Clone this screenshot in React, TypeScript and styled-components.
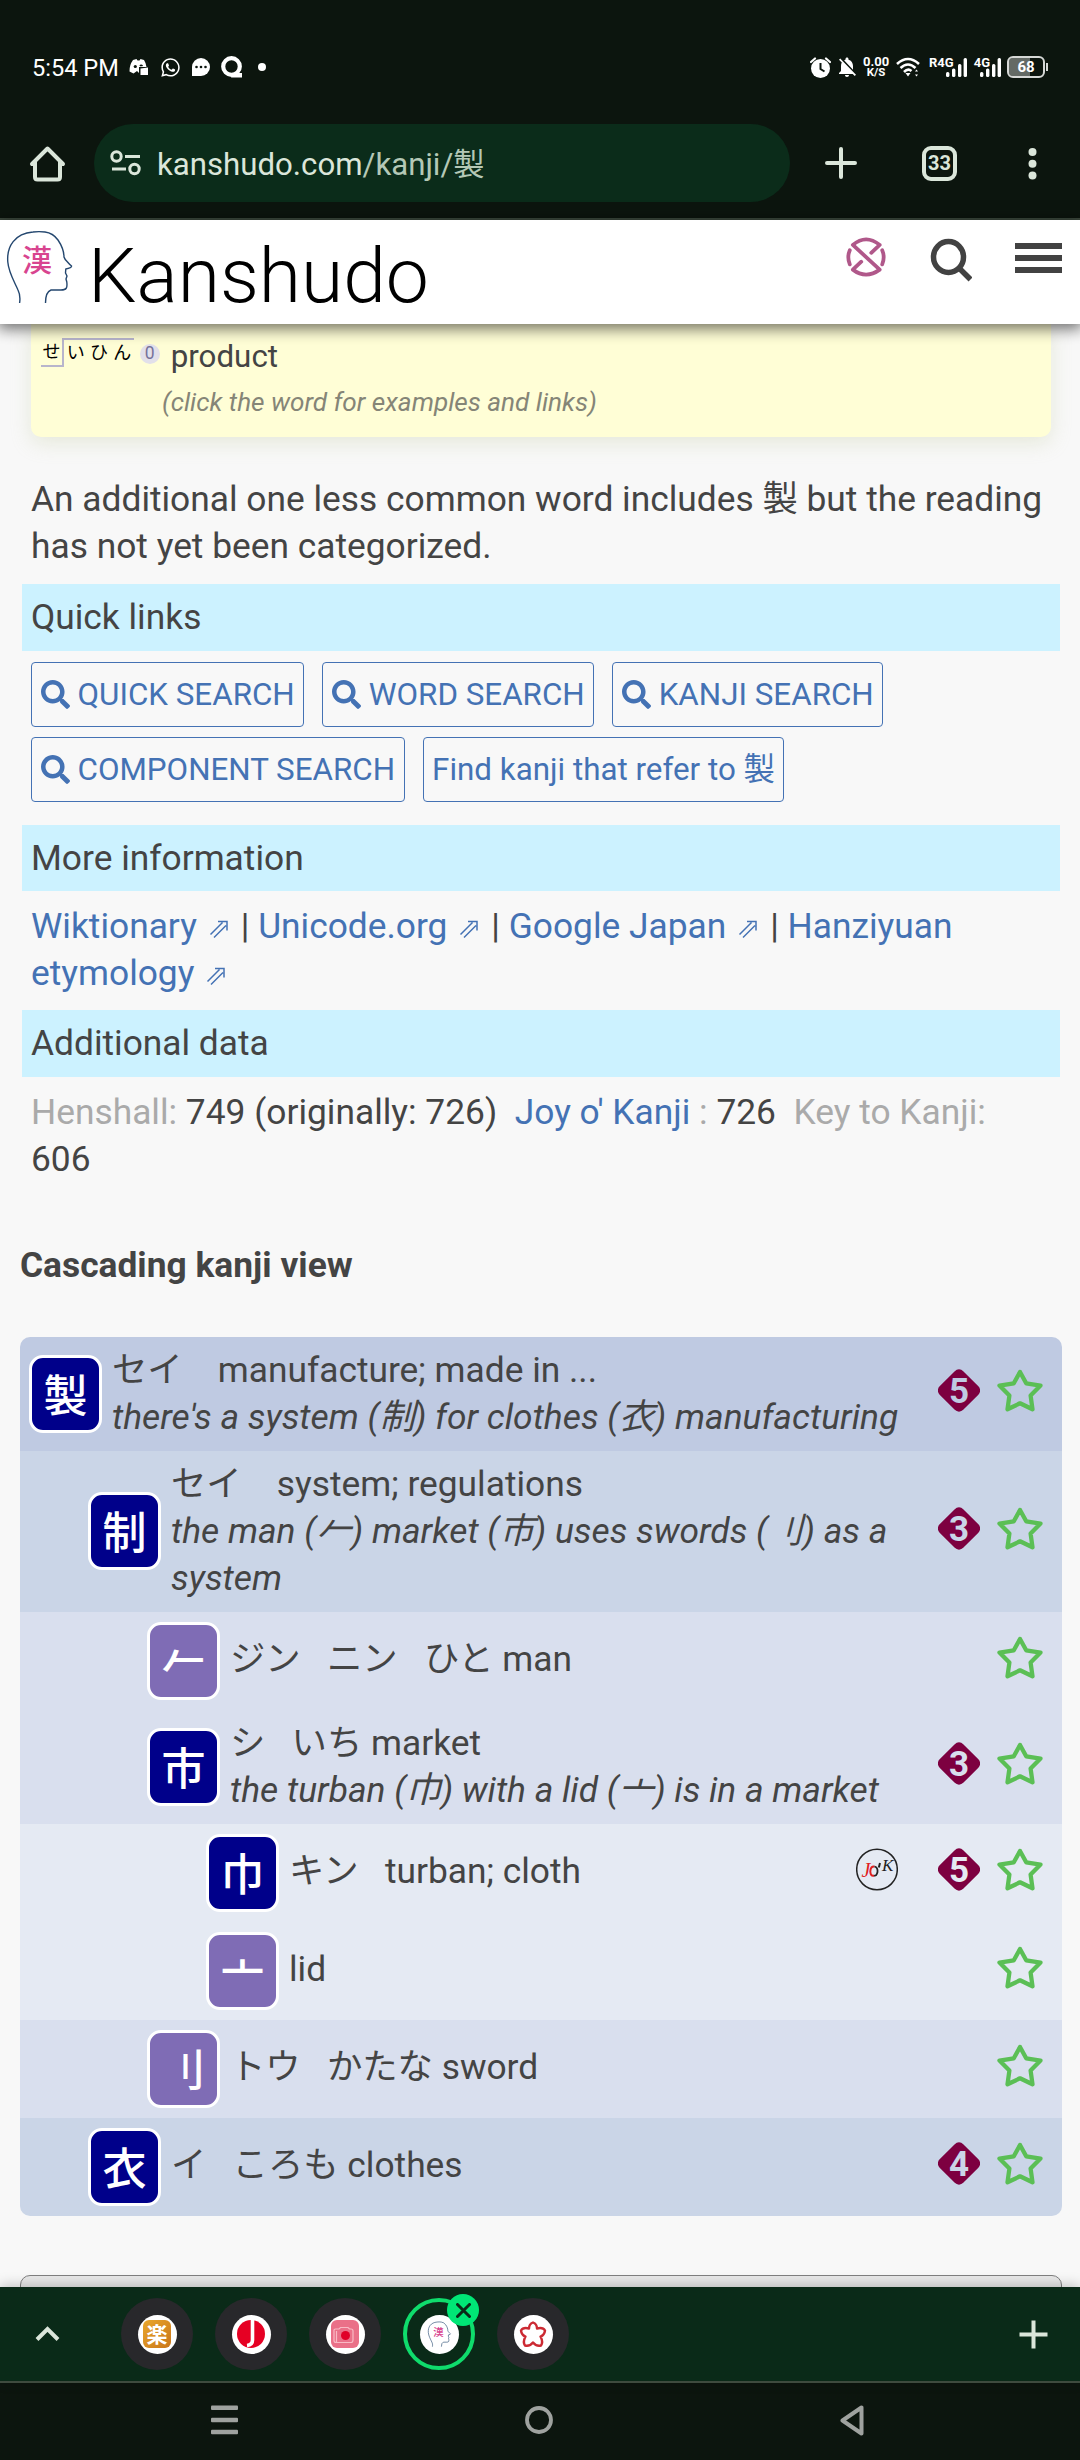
import React from "react";
import styled, { createGlobalStyle } from "styled-components";
import { FaWhatsapp, FaSearch } from "react-icons/fa";
import { MdNotificationsOff } from "react-icons/md";

const GlobalStyle = createGlobalStyle`
  *, *::before, *::after { box-sizing: border-box; }
  body { margin: 0; background: #0c150e; }
`;

const FONT = `Roboto, "Noto Sans CJK JP", sans-serif`;
const INK = "#444";
const LINK = "#4472b4";
const MINT = "#dbe6da";

const Screen = styled.div`
  width: 1080px;
  height: 2460px;
  display: flex;
  flex-direction: column;
  overflow: hidden;
  font-family: ${FONT};
  font-size: 35.33px;
  line-height: 47px;
  color: ${INK};
  background: #0c150e;
`;

/* ---------- status bar ---------- */

const StatusBar = styled.div`
  height: 124px;
  flex: none;
  display: flex;
  justify-content: space-between;
  align-items: center;
  padding: 10px 32px 0 32px;
  color: #fff;
`;

const StatusGroup = styled.div`
  display: flex;
  align-items: center;
  height: 24px;
  svg { display: block; flex: none; }
`;

const Clock = styled.span`
  font-size: 23.6px;
  line-height: 24px;
  width: 97px;
  white-space: nowrap;
  padding-top: 1px;
`;

const Spacer = styled.span<{ $w: number; $pull?: number }>`
  width: ${(p) => p.$w}px;
  margin-left: ${(p) => -(p.$pull || 0)}px;
  flex: none;
`;

const Speed = styled.div`
  width: 26px;
  display: flex;
  flex-direction: column;
  align-items: center;
  font-weight: 700;
  font-size: 13px;
  line-height: 11px;
  small { font-size: 11.5px; line-height: 11px; }
`;

const NetLabel = styled.span`
  font-size: 13px;
  font-weight: 700;
  line-height: 13px;
  align-self: flex-start;
  margin-top: 1px;
`;

const Battery = styled.div`
  width: 38px;
  height: 22px;
  border: 2px solid #d6d8d6;
  border-radius: 6px;
  font-size: 15px;
  font-weight: 700;
  line-height: 18px;
  text-align: center;
  background: linear-gradient(90deg, #646a65 62%, transparent 62%);
  background-clip: content-box;
`;

const BatteryTip = styled.span`
  width: 2px;
  height: 8px;
  margin-left: 1px;
  background: #d6d8d6;
`;

/* ---------- browser toolbar ---------- */

const Toolbar = styled.div`
  height: 96px;
  flex: none;
  display: flex;
  align-items: flex-start;
  border-bottom: 2px solid #3e4b3f;
  color: ${MINT};
  padding-left: 29px;
  svg { display: block; flex: none; }
`;

const ToolCell = styled.div<{ $w: number; $pad?: number }>`
  width: ${(p) => p.$w}px;
  padding-left: ${(p) => p.$pad || 0}px;
  height: 78px;
  flex: none;
  display: flex;
  align-items: center;
`;

const Omnibox = styled.div`
  width: 696px;
  height: 78px;
  flex: none;
  border-radius: 39px;
  background: #0b2c1a;
  display: flex;
  align-items: center;
  gap: 16px;
  padding-left: 16px;
  font-size: 31.2px;
  color: #b4c8b6;
  span { padding-top: 2px; }
  b { font-weight: 400; color: ${MINT}; }
`;

const TabCount = styled.div`
  width: 35px;
  height: 35px;
  border: 4px solid ${MINT};
  border-radius: 9px;
  font-size: 20px;
  font-weight: 700;
  line-height: 26px;
  text-align: center;
`;

/* ---------- site header ---------- */

const SiteHeader = styled.header`
  position: relative;
  z-index: 1;
  height: 104px;
  flex: none;
  display: flex;
  align-items: flex-start;
  background: #fff;
  box-shadow: 0 3px 14px 2px rgba(0, 0, 0, 0.55);
  padding-left: 4px;
  svg { display: block; flex: none; }
`;

const LogoMark = styled.div`
  padding-top: 9px;
`;

const SiteName = styled.span`
  width: 770px;
  padding: 11px 0 0 12px;
  font-size: 76.8px;
  line-height: 90px;
  font-weight: 300;
  color: #000;
`;

const HeaderIcons = styled.div`
  display: flex;
  gap: 43px;
  padding-top: 17px;
`;

/* ---------- page ---------- */

const Page = styled.main`
  height: 1963px;
  flex: none;
  overflow: hidden;
  background: #f8f8f8;
  display: flex;
  flex-direction: column;
`;

const WordCard = styled.section`
  height: 113px;
  flex: none;
  margin: 0 29px 0 31px;
  border-radius: 0 0 10px 10px;
  background: #fffed6;
  box-shadow: 0 6px 20px rgba(190, 200, 150, 0.3);
  padding: 10px 0 0 10px;
`;

const WordRow = styled.div`
  display: flex;
  height: 45px;
`;

const Pitch = styled.div`
  display: flex;
  margin-top: 4px;
  height: 30px;
  color: #000;
  font-size: 18px;
  line-height: 29px;
`;

const Mora = styled.span<{ $high?: boolean; $drop?: boolean }>`
  width: 23.2px;
  height: 29px;
  text-align: center;
  line-height: ${(p) => (p.$high ? 25 : 28)}px;
  border-top: ${(p) => (p.$high ? "2px solid #b8b5cc" : "0")};
  border-bottom: ${(p) => (p.$drop ? "2px solid #b8b5cc" : "0")};
  border-right: ${(p) => (p.$drop ? "2px solid #b8b5cc" : "0")};
`;

const Accent = styled.span`
  width: 20px;
  height: 20px;
  margin: 10px 0 0 6px;
  border-radius: 50%;
  background: #e2e0ea;
  color: #77739a;
  font-size: 17.5px;
  line-height: 19px;
  text-align: center;
`;

const Meaning = styled.span`
  font-size: 31.3px;
  line-height: 45px;
  margin-left: 11px;
`;

const Hint = styled.p`
  margin: 0 0 0 121px;
  font-size: 26.15px;
  line-height: 47px;
  font-style: italic;
  color: #858577;
`;

const Para = styled.p<{ $top: number; $bottom: number }>`
  margin: ${(p) => p.$top}px 10px ${(p) => p.$bottom}px 31px;
  flex: none;
  height: 94px;
  white-space: pre-line;
`;

const SectionBar = styled.h3`
  margin: 0 20px 0 22px;
  height: 66.5px;
  flex: none;
  padding-left: 9px;
  line-height: 66px;
  font-size: 35.33px;
  font-weight: 400;
  background: #ccf2ff;
`;

const Buttons = styled.div`
  display: flex;
  flex-wrap: wrap;
  gap: 10px 18px;
  margin: 11.5px 100px 22.5px 31px;
  flex: none;
`;

const Button = styled.button`
  height: 65px;
  display: flex;
  align-items: center;
  gap: 8px;
  padding: 0 8.5px;
  border: 1px solid ${LINK};
  border-radius: 4px;
  background: transparent;
  color: ${LINK};
  font-family: ${FONT};
  font-size: 31.35px;
  line-height: 37px;
  white-space: nowrap;
  svg { display: block; }
`;

const A = styled.a`
  color: ${LINK};
`;

const Ext = styled.svg`
  width: 20px;
  height: 20px;
  margin: 0 3.2px;
  vertical-align: -1px;
`;

const Muted = styled.span`
  color: #aaa;
`;

const Title = styled.h2`
  margin: 59.5px 0 47.5px 20px;
  flex: none;
  font-size: 35.33px;
  line-height: 47px;
  font-weight: 700;
`;

const Cascade = styled.section`
  flex: none;
  margin: 0 18px 0 20px;
  border-radius: 10px;
  overflow: hidden;
`;

const SHADES = ["#bfcae2", "#cad5e7", "#d9dfee", "#e5eaf3"];

const CascadeRow = styled.div<{ $level: number }>`
  display: flex;
  align-items: center;
  padding: 10px 19px 10px ${(p) => 9 + p.$level * 59}px;
  background: ${(p) => SHADES[p.$level]};
`;

const Tile = styled.div<{ $component?: boolean }>`
  width: 73px;
  height: 78px;
  flex: none;
  border: 3px solid #fff;
  border-radius: 14px;
  background: ${(p) => (p.$component ? "#7f6cb5" : "#00008a")};
  color: #fff;
  font-size: 44px;
  line-height: 71px;
  text-align: center;
  font-weight: 500;
  font-family: "Noto Sans CJK JP", sans-serif;
`;

const RowText = styled.div<{ $single: boolean }>`
  flex: 1;
  min-width: 0;
  margin: 0 0 ${(p) => (p.$single ? 2 : 0)}px 10px;
  white-space: pre;
  em { display: block; }
`;

const RowIcons = styled.div`
  display: flex;
  flex: none;
  margin-top: -6px;
  svg { display: block; }
`;

const NextPanel = styled.div`
  flex: none;
  margin: 59px 18px 0 20px;
  height: 40px;
  border: 1px solid #808080;
  border-radius: 10px;
  background: #e9e9e9;
`;

/* ---------- bottom bars ---------- */

const TabStrip = styled.div`
  position: relative;
  z-index: 1;
  height: 96px;
  flex: none;
  display: flex;
  align-items: center;
  background: #0a2a18;
  border-bottom: 2px solid #3e4b3f;
  box-shadow: 0 -2px 12px rgba(0, 0, 0, 0.22);
  padding-left: 35px;
  svg { display: block; flex: none; }
`;

const Tabs = styled.div`
  display: flex;
  gap: 22px;
  margin: 0 450px 0 61px;
`;

const Tab = styled.div<{ $active?: boolean }>`
  position: relative;
  width: 72px;
  height: 72px;
  flex: none;
  border-radius: 50%;
  display: flex;
  align-items: center;
  justify-content: center;
  background: ${(p) => (p.$active ? "transparent" : "#28282b")};
  border: ${(p) => (p.$active ? "4px solid #0fdc6c" : "0")};
`;

const Favicon = styled.div`
  width: 39px;
  height: 39px;
  border-radius: 50%;
  background: #fff;
  display: flex;
  align-items: center;
  justify-content: center;
`;

const GlyphIcon = styled.div`
  width: 28px;
  height: 28px;
  border-radius: 6px;
  background: linear-gradient(135deg, #e9a62c, #c9761a);
  color: #fff;
  font-family: "Noto Sans CJK JP", sans-serif;
  font-size: 21px;
  font-weight: 700;
  line-height: 27px;
  text-align: center;
`;

const CloseBadge = styled.div`
  position: absolute;
  left: 40px;
  top: -8px;
  width: 32px;
  height: 32px;
  border-radius: 50%;
  background: #00e676;
  display: flex;
  align-items: center;
  justify-content: center;
`;

const NavBar = styled.nav`
  height: 77px;
  flex: none;
  display: flex;
  align-items: center;
  justify-content: space-between;
  padding: 0 215px 3px 211px;
  svg { display: block; }
`;

/* ---------- drawings ---------- */

const Bars = () => (
  <svg width="21" height="20" viewBox="0 0 21 20" fill="#fff">
    <rect x="0" y="15" width="3.4" height="5" rx="1.5" />
    <rect x="6" y="11.5" width="3.4" height="8.5" rx="1.5" />
    <rect x="12" y="7" width="3.4" height="13" rx="1.5" />
    <rect x="17.6" y="1" width="3.4" height="19" rx="1.5" />
  </svg>
);

const HeadLogo = ({ size, weight }: { size: number; weight: number }) => (
  <svg width={size} height={(size * 76) / 72} viewBox="4 229 72 76">
    <path
      d="M19.6 303 C20.5 297 20 294 18 290 C14 281 8.5 272 7.8 262 C6.5 246 15 233.5 33 232 Q39 231.300 45 232 Q53 233 58 240 C62 246 64 251 64 257 Q64.500 259 67.500 262 Q70 265 71.600 266 Q71.500 268 65.800 269 L65.500 273 L67 276 L66 279 L66.800 282 C67.500 288 66.500 290 61 290 L51 290 Q45.500 292 45.500 303"
      fill="none"
      stroke="#24476f"
      strokeWidth={weight}
      strokeLinejoin="round"
    />
    <text x="22" y="271" fontSize="30" fontWeight="500" fill="#d8448f" fontFamily="Noto Sans CJK JP">漢</text>
  </svg>
);

const Star = () => (
  <svg width="46" height="43" viewBox="0 0 46 43">
    <path
      d="M23 3 L29.2 14.300 L43.500 16.500 L33.600 26.500 L35.500 40.300 L23 34.300 L10.500 40.300 L12.400 26.500 L2.500 16.500 L16.800 14.300Z"
      fill="none"
      stroke="#5bbf55"
      strokeWidth="4.300"
      strokeLinejoin="round"
    />
  </svg>
);

const Level = ({ n, color }: { n: number; color: string }) => (
  <svg width="42" height="43" viewBox="0 0 42 43">
    <rect x="4.300" y="4.800" width="33.400" height="33.400" rx="6" transform="rotate(45 21 21.500)" fill="#7d0040" />
    <text x="21" y="34" fontSize="35" fontWeight="700" textAnchor="middle" fill={color} fontFamily="Roboto">
      {n}
    </text>
  </svg>
);

const Jok = () => (
  <svg width="42" height="43" viewBox="0 0 42 43">
    <circle cx="21" cy="21.500" r="20.300" fill="none" stroke="#222" strokeWidth="1.500" />
    <text x="5.500" y="29" fontSize="20" fill="#e02020" fontFamily="Liberation Serif" fontStyle="italic">J</text>
    <path d="M18.500 18.500 Q14.500 18 14.300 23.500 Q14.500 28.500 18 27.500" fill="none" stroke="#e02020" strokeWidth="2" />
    <path d="M18.500 18.500 Q22 19.500 21.500 24 Q20.500 28.500 18 27.500" fill="none" stroke="#222" strokeWidth="1.800" />
    <path d="M24 15 L22.800 19.500" stroke="#222" strokeWidth="2" />
    <text x="26" y="23" fontSize="17" fill="#222" fontFamily="Liberation Serif" fontStyle="italic">K</text>
  </svg>
);

const ExtArrow = () => (
  <Ext viewBox="0 0 20 20" fill="none" stroke={LINK} strokeWidth="1.500">
    <path d="M1.500 15.500 L13.500 3.500 M5 18.500 L17 6.500 M9 2.500 H18 V11.500" />
  </Ext>
);

/* ---------- data ---------- */

type Entry = {
  level: number;
  kanji: string;
  component?: boolean;
  text: string;
  mnemonic?: string;
  grade?: number;
  jok?: boolean;
};

const ENTRIES: Entry[] = [
  { level: 0, kanji: "製", text: "セイ    manufacture; made in ...", mnemonic: "there's a system (制) for clothes (衣) manufacturing", grade: 5 },
  { level: 1, kanji: "制", text: "セイ    system; regulations", mnemonic: "the man (𠂉) market (市) uses swords (刂) as a\nsystem", grade: 3 },
  { level: 2, kanji: "𠂉", component: true, text: "ジン   ニン   ひと man" },
  { level: 2, kanji: "市", text: "シ   いち market", mnemonic: "the turban (巾) with a lid (亠) is in a market", grade: 3 },
  { level: 3, kanji: "巾", text: "キン   turban; cloth", grade: 5, jok: true },
  { level: 3, kanji: "亠", component: true, text: "lid" },
  { level: 2, kanji: "刂", component: true, text: "トウ   かたな sword" },
  { level: 1, kanji: "衣", text: "イ   ころも clothes", grade: 4 },
];

const SEARCHES = ["QUICK SEARCH", "WORD SEARCH", "KANJI SEARCH", "COMPONENT SEARCH"];

export default function App() {
  return (
    <Screen lang="ja">
      <GlobalStyle />
      <StatusBar>
        <StatusGroup>
          <Clock>5:54 PM</Clock>
          <svg width="20" height="18" viewBox="0 0 20 18">
            <path d="M4 2 L7.500 1 L8.500 2.500 H10.500 L11.500 1 L15 2 Q17 5 17.500 9 H10 V15 L8 13 L4.500 15.500 L0.500 13.500 Q0.300 7 4 2Z" fill="#fff" />
            <circle cx="6.300" cy="8.500" r="1.600" fill="#0c150e" />
            <path d="M11 8 Q12 6.500 13.500 8" stroke="#0c150e" strokeWidth="1.500" fill="none" />
            <path d="M11.500 10.500 L19 9.500 V17 H11.500Z" fill="#fff" />
          </svg>
          <Spacer $w={11} />
          <FaWhatsapp size={21} />
          <Spacer $w={11} />
          <svg width="18" height="18" viewBox="0 0 18 18">
            <path d="M0 18 V9 A9 9 0 1 1 9 18Z" fill="#fff" />
            <g fill="#0c150e">
              <circle cx="4.500" cy="9" r="1.300" />
              <circle cx="9" cy="9" r="1.300" />
              <circle cx="13.500" cy="9" r="1.300" />
            </g>
          </svg>
          <Spacer $w={11} />
          <svg width="22" height="22" viewBox="0 0 22 22">
            <circle cx="10.500" cy="10.500" r="8.300" fill="none" stroke="#fff" strokeWidth="4.200" />
            <path d="M12 17 H21 V21.500 H10Z" fill="#fff" />
          </svg>
          <Spacer $w={15} />
          <svg width="8" height="8" viewBox="0 0 8 8">
            <circle cx="4" cy="4" r="4" fill="#fff" />
          </svg>
        </StatusGroup>
        <StatusGroup>
          <svg width="21" height="21" viewBox="0 0 21 21">
            <circle cx="10.500" cy="11.500" r="9.500" fill="#fff" />
            <path d="M1 5 L5 1.500 M20 5 L16 1.500" stroke="#fff" strokeWidth="2.200" strokeLinecap="round" />
            <path d="M10.500 6 V12 L14.500 14.500" stroke="#0c150e" strokeWidth="2" fill="none" />
          </svg>
          <Spacer $w={4} />
          <MdNotificationsOff size={24} />
          <Spacer $w={4} />
          <Speed>
            0.00<small>K/S</small>
          </Speed>
          <Spacer $w={7} />
          <svg width="24" height="20" viewBox="0 0 24 20" fill="none" stroke="#fff" strokeWidth="2.600">
            <path d="M1 7 Q12 -3 23 7 M4.500 11 Q12 4 19.500 11 M8 15 Q12 11 15.500 14" />
            <path d="M12 19.500 L9.500 16 H14.500Z M20.500 12.500 L22 14.500 H19Z M20.500 19.500 L22 17.500 H19Z" fill="#fff" stroke="none" />
          </svg>
          <Spacer $w={9} />
          <NetLabel>R4G</NetLabel>
          <Spacer $w={0} $pull={8} />
          <Bars />
          <Spacer $w={7} />
          <NetLabel>4G</NetLabel>
          <Spacer $w={0} $pull={10} />
          <Bars />
          <Spacer $w={6} />
          <Battery>68</Battery>
          <BatteryTip />
        </StatusGroup>
      </StatusBar>

      <Toolbar>
        <ToolCell $w={65}>
          <svg width="37" height="37" viewBox="0 0 37 37" fill="none" stroke={MINT} strokeWidth="4" strokeLinejoin="round" strokeLinecap="round">
            <path d="M3 19 L18.500 3.500 L34 19 M6 17 V32 Q6 34.500 8.500 34.500 H28.500 Q31 34.500 31 32 V17" />
          </svg>
        </ToolCell>
        <Omnibox>
          <svg width="31" height="26" viewBox="0 0 31 26" fill="none" stroke={MINT} strokeWidth="3">
            <circle cx="6.500" cy="6.500" r="4.700" />
            <path d="M15 6.500 H30 M2 19 H16" />
            <circle cx="24.500" cy="19" r="4.700" />
          </svg>
          <span>
            <b>kanshudo.com</b>/kanji/製
          </span>
        </Omnibox>
        <ToolCell $w={132} $pad={35}>
          <svg width="32" height="32" viewBox="0 0 32 32" stroke={MINT} strokeWidth="4" strokeLinecap="round">
            <path d="M16 2 V30 M2 16 H30" />
          </svg>
        </ToolCell>
        <ToolCell $w={106}>
          <TabCount>33</TabCount>
        </ToolCell>
        <ToolCell $w={10}>
          <svg width="9" height="33" viewBox="0 0 9 33" fill={MINT}>
            <circle cx="4.500" cy="5" r="4" />
            <circle cx="4.500" cy="16.700" r="4" />
            <circle cx="4.500" cy="28.400" r="4" />
          </svg>
        </ToolCell>
      </Toolbar>

      <SiteHeader>
        <LogoMark>
          <HeadLogo size={72} weight={1.4} />
        </LogoMark>
        <SiteName>Kanshudo</SiteName>
        <HeaderIcons>
          <svg width="40" height="40" viewBox="0 0 38 38" fill="none" stroke="#b0588a" strokeWidth="3.600" strokeLinecap="round" strokeLinejoin="round">
            <path d="M24 15 L32 7.500 Q19 -3 6.500 7.500 L32 31 Q19 40.500 6.500 31 L14.500 23.500" />
            <path d="M3.600 12.500 Q0.800 19 3.600 26 M34.400 12.500 Q37.200 19 34.400 26" />
          </svg>
          <svg width="43" height="46" viewBox="0 0 43 46" fill="none" stroke="#424242" strokeWidth="5.500">
            <ellipse cx="19.500" cy="20" rx="15" ry="15.500" />
            <path d="M30 31 L41.500 42.500" />
          </svg>
          <svg width="47" height="38" viewBox="0 0 47 38" fill="#424242">
            <rect y="6" width="47" height="6" />
            <rect y="18" width="47" height="6" />
            <rect y="30" width="47" height="6" />
          </svg>
        </HeaderIcons>
      </SiteHeader>

      <Page>
        <WordCard>
          <WordRow>
            <Pitch>
              <Mora $drop>せ</Mora>
              <Mora $high>い</Mora>
              <Mora $high>ひ</Mora>
              <Mora $high>ん</Mora>
            </Pitch>
            <Accent>0</Accent>
            <Meaning>product</Meaning>
          </WordRow>
          <Hint>(click the word for examples and links)</Hint>
        </WordCard>

        <Para $top={38.5} $bottom={14.5}>
          {"An additional one less common word includes 製 but the reading\nhas not yet been categorized."}
        </Para>

        <SectionBar>Quick links</SectionBar>
        <Buttons>
          {SEARCHES.map((s) => (
            <Button key={s}>
              <FaSearch size={29} />
              {s}
            </Button>
          ))}
          <Button>Find kanji that refer to 製</Button>
        </Buttons>

        <SectionBar>More information</SectionBar>
        <Para $top={12} $bottom={13}>
          <A>Wiktionary <ExtArrow /></A> | <A>Unicode.org <ExtArrow /></A> | <A>Google Japan <ExtArrow /></A> | <A>Hanziyuan{"\n"}etymology <ExtArrow /></A>
        </Para>

        <SectionBar>Additional data</SectionBar>
        <Para $top={12.5} $bottom={-0.5}>
          <Muted>Henshall:</Muted> 749 (originally: 726)&nbsp; <A>Joy o' Kanji</A> <Muted>:</Muted> 726&nbsp; <Muted>Key to Kanji:</Muted>{"\n"}606
        </Para>

        <Title>Cascading kanji view</Title>
        <Cascade>
          {ENTRIES.map((e) => (
            <CascadeRow key={e.kanji} $level={e.level}>
              <Tile $component={e.component}>{e.kanji}</Tile>
              <RowText $single={!e.mnemonic}>
                {e.text}
                {e.mnemonic && <em>{e.mnemonic}</em>}
              </RowText>
              <RowIcons>
                {e.jok && <Jok />}
                <Spacer $w={40} />
                {e.grade && <Level n={e.grade} color={SHADES[e.level]} />}
                <Spacer $w={17} />
                <Star />
              </RowIcons>
            </CascadeRow>
          ))}
        </Cascade>
        <NextPanel />
      </Page>

      <TabStrip>
        <svg width="25" height="16" viewBox="0 0 25 16" fill="none" stroke={MINT} strokeWidth="4">
          <path d="M2 13.500 L12.500 3 L23 13.500" />
        </svg>
        <Tabs>
          <Tab>
            <Favicon>
              <GlyphIcon>楽</GlyphIcon>
            </Favicon>
          </Tab>
          <Tab>
            <Favicon>
              <svg width="28" height="28" viewBox="0 0 28 28">
                <circle cx="14" cy="14" r="14" fill="#e60023" />
                <path d="M15.500 0 V20 Q15.500 25 10 25.500" fill="none" stroke="#fff" strokeWidth="3.600" />
              </svg>
            </Favicon>
          </Tab>
          <Tab>
            <Favicon>
              <svg width="28" height="28" viewBox="0 0 28 28">
                <rect width="28" height="28" rx="6" fill="#ea7088" />
                <path d="M3 10 Q3 9 4.500 9 H8 L9.500 7.500 H17 L18.500 9 H20 Q22 9 22 11 V20 Q22 22.500 20 22.500 H5 Q3 22.500 3 20.500Z M5.500 11 V22" fill="none" stroke="#f9b9c4" strokeWidth="1.200" />
                <circle cx="14.500" cy="15.500" r="4.500" fill="#e00028" />
              </svg>
            </Favicon>
          </Tab>
          <Tab $active>
            <Favicon>
              <HeadLogo size={25} weight={1.8} />
            </Favicon>
            <CloseBadge>
              <svg width="15" height="15" viewBox="0 0 15 15" stroke="#0a2a18" strokeWidth="3" strokeLinecap="round">
                <path d="M1.500 1.500 L13.500 13.500 M13.500 1.500 L1.500 13.500" />
              </svg>
            </CloseBadge>
          </Tab>
          <Tab>
            <Favicon>
              <svg width="28" height="28" viewBox="0 0 28 28">
                <path
                  d="M14 2.500 Q18 4 18 8.500 Q24 7 26 10.500 Q25.500 15 21.500 16.500 Q24.500 22 22 25.500 Q17 26.500 14 22.500 Q11 26.500 6 25.500 Q3.500 22 6.500 16.500 Q2.500 15 2 10.500 Q4 7 10 8.500 Q10 4 14 2.500Z"
                  fill="none"
                  stroke="#cc2a33"
                  strokeWidth="2.400"
                  strokeLinejoin="round"
                />
              </svg>
            </Favicon>
          </Tab>
        </Tabs>
        <svg width="29" height="29" viewBox="0 0 29 29" stroke={MINT} strokeWidth="4">
          <path d="M14.500 0.500 V28.500 M0.500 14.500 H28.500" />
        </svg>
      </TabStrip>

      <NavBar>
        <svg width="27" height="30" viewBox="0 0 27 30" fill="#9fa29f">
          <rect y="0.500" width="27" height="4.500" rx="1" />
          <rect y="12.700" width="27" height="4.500" rx="1" />
          <rect y="24.800" width="27" height="4.500" rx="1" />
        </svg>
        <svg width="28" height="28" viewBox="0 0 28 28">
          <circle cx="14" cy="14" r="12" fill="none" stroke="#9fa29f" strokeWidth="3.800" />
        </svg>
        <svg width="25" height="31" viewBox="0 0 25 31">
          <path d="M2.500 15.500 L21.500 2.500 V28.500Z" fill="none" stroke="#9fa29f" strokeWidth="4" strokeLinejoin="round" />
        </svg>
      </NavBar>
    </Screen>
  );
}
